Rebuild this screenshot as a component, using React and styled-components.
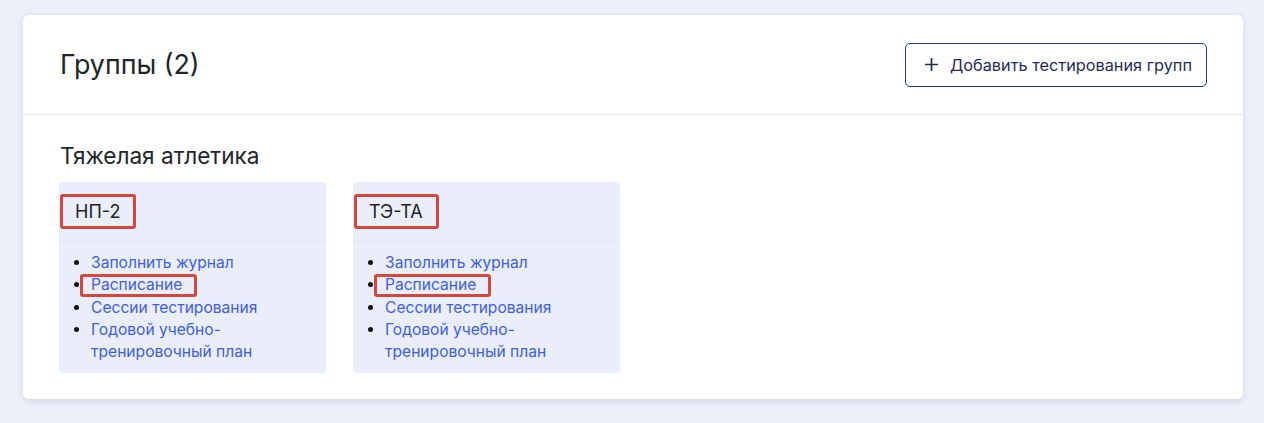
import React from "react";
import styled, { createGlobalStyle } from "styled-components";

const Global = createGlobalStyle`
  html, body { margin: 0; padding: 0; background: #edf0fa; }
  body { font-family: Inter, "Noto Sans", sans-serif; color: #212529; }
  * { box-sizing: border-box; }
`;

const Page = styled.div`
  padding: 0 21px 24px 23px;
`;

const PrevEdge = styled.div`
  height: 0;
  box-shadow: 0 1px 4px 1px rgba(60, 70, 120, 0.1);
  margin-bottom: 15px;
`;

const Card = styled.section`
  background: #fff;
  border-radius: 6px;
  box-shadow: 0 3px 6px rgba(60, 70, 120, 0.14);
`;

const CardHeader = styled.header`
  height: 100px;
  display: flex;
  align-items: center;
  justify-content: space-between;
  padding: 0 36px 0 37px;
  border-bottom: 1px solid #e3e8f3;
`;

const Title = styled.h2`
  margin: 0 0 1px;
  font-size: 26.8px;
  font-weight: 400;
  color: #212529;
`;

const OutlineButton = styled.button`
  display: flex;
  align-items: center;
  gap: 12px;
  height: 44px;
  padding: 0 14px 0 19px;
  border: 1px solid #283570;
  border-radius: 5px;
  background: #fff;
  color: #262d55;
  font-family: Inter, sans-serif;
  font-size: 16.3px;
  cursor: pointer;
`;

const CardBody = styled.div`
  padding: 28px 37px 26px 36px;
`;

const SectionTitle = styled.h3`
  margin: 0 0 13px 1px;
  font-size: 22.6px;
  line-height: 26px;
  font-weight: 400;
  color: #212529;
`;

const GroupRow = styled.div`
  display: flex;
  gap: 27px;
  align-items: flex-start;
`;

const Group = styled.div`
  width: 267px;
  background: #eaeefa;
  border-radius: 4px;
`;

const GroupHeader = styled.div`
  padding: 12px 1px;
  border-bottom: 1px solid #dde3f1;
`;

const Marked = styled.span`
  display: inline-block;
  padding: 0 13px 0 12px;
  line-height: 29px;
  font-size: 18px;
  color: #222;
  border: 3px solid #d4473b;
  border-radius: 3px;
`;

const LinkList = styled.ul`
  margin: 0;
  padding: 10px 12px 10px 32px;
  font-size: 15.6px;
  line-height: 22.3px;
  color: #111;
`;

const Item = styled.li``;

const Link = styled.a`
  color: #3e5fe3;
  text-decoration: none;
  position: relative;
  display: ${(p) => (p.$marked ? "inline-block" : "inline")};
  &::after {
    content: "";
    display: ${(p) => (p.$marked ? "block" : "none")};
    position: absolute;
    top: 0;
    bottom: 0;
    left: -11px;
    right: -15px;
    border: 3px solid #d4473b;
    border-radius: 3px;
  }
`;

const PlusIcon = () => (
  <svg width="13" height="13" viewBox="0 0 13 13" fill="none">
    <path d="M6.5 0.5v12M0.5 6.5h12" stroke="#262d55" strokeWidth="1.7" strokeLinecap="round" />
  </svg>
);

const groups = ["НП-2", "ТЭ-ТА"];
const links = [
  "Заполнить журнал",
  "Расписание",
  "Сессии тестирования",
  "Годовой учебно-тренировочный план",
];

export default function App() {
  return (
    <Page>
      <Global />
      <PrevEdge />
      <Card>
        <CardHeader>
          <Title>Группы (2)</Title>
          <OutlineButton>
            <PlusIcon />
            Добавить тестирования групп
          </OutlineButton>
        </CardHeader>
        <CardBody>
          <SectionTitle>Тяжелая атлетика</SectionTitle>
          <GroupRow>
            {groups.map((g) => (
              <Group key={g}>
                <GroupHeader>
                  <Marked>{g}</Marked>
                </GroupHeader>
                <LinkList>
                  {links.map((l) => (
                    <Item key={l}>
                      <Link href="#" $marked={l === "Расписание"}>
                        {l}
                      </Link>
                    </Item>
                  ))}
                </LinkList>
              </Group>
            ))}
          </GroupRow>
        </CardBody>
      </Card>
    </Page>
  );
}
